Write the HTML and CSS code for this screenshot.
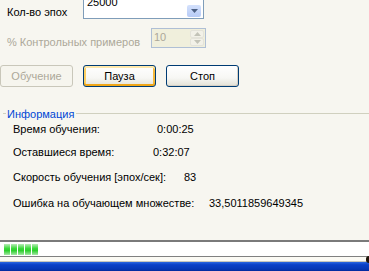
FILE: index.html
```html
<!DOCTYPE html>
<html lang="ru">
<head>
    <meta charset="UTF-8">
    <title>Обучение сети</title>
    <link rel="stylesheet" href="styles.css">
</head>
<body>
    <div class="page">
        <div class="field-row epochs">
            <span class="field-label">Кол-во эпох</span>
            <div class="combo">
                <span class="combo-text">25000</span>
                <span class="combo-btn">
                    <svg width="7" height="4" viewBox="0 0 7 4"><path d="M0 0h7L3.5 4z" fill="#4d6185"/></svg>
                </span>
            </div>
        </div>

        <div class="field-row control">
            <span class="field-label disabled">% Контрольных примеров</span>
            <div class="numeric">
                <span class="numeric-text">10</span>
                <span class="spinner">
                    <span class="spin-btn"><svg width="7" height="4" viewBox="0 0 7 4"><path d="M0 4h7L3.5 0z" fill="#c3c3b8"/></svg></span>
                    <span class="spin-btn"><svg width="7" height="4" viewBox="0 0 7 4"><path d="M0 0h7L3.5 4z" fill="#c3c3b8"/></svg></span>
                </span>
            </div>
        </div>

        <div class="controls">
            <button class="btn" disabled>Обучение</button>
            <button class="btn hover">Пауза</button>
            <button class="btn">Стоп</button>
        </div>

        <div class="group">
            <div class="group-head">
                <span class="group-line short"></span>
                <span class="group-title">Информация</span>
                <span class="group-line"></span>
            </div>
            <div class="info-row"><span class="info-label">Время обучения:</span><span>0:00:25</span></div>
            <div class="info-row"><span class="info-label">Оставшиеся время:</span><span>0:32:07</span></div>
            <div class="info-row"><span class="info-label">Скорость обучения [эпох/сек]:</span><span>83</span></div>
            <div class="info-row"><span class="info-label">Ошибка на обучающем множестве:</span><span>33,5011859649345</span></div>
        </div>

        <div class="progress">
            <span class="block"></span>
            <span class="block"></span>
            <span class="block"></span>
            <span class="block"></span>
            <span class="block"></span>
        </div>
        <div class="strip"></div>
        <div class="taskbar"></div>
        <span class="grip"></span>
    </div>
</body>
</html>
```

FILE: styles.css
```css
* {
    box-sizing: border-box;
    margin: 0;
    padding: 0;
}

body {
    font-family: "Liberation Sans", Arial, sans-serif;
    font-size: 11px;
    line-height: 13px;
    color: #000;
    background-color: #f7f6f0;
}

.page {
    position: relative;
    height: 271px;
    overflow: hidden;
    background-color: #f7f6f0;
}

.field-row {
    display: flex;
    margin-left: 7px;
}

.field-label {
    white-space: nowrap;
}

.field-label.disabled {
    color: #aca899;
}

.epochs {
    margin-top: -4px;
    height: 23px;
}

.epochs .field-label {
    width: 76px;
    padding-top: 10px;
}

.combo {
    width: 121px;
    height: 23px;
    border: 1px solid #7f9db9;
    background-color: #fff;
    display: flex;
    justify-content: space-between;
}

.combo-text {
    padding-left: 3px;
    margin-top: -1px;
    line-height: 12px;
}

.combo-btn {
    align-self: flex-end;
    width: 14px;
    height: 12px;
    margin: 0 2px 1px 0;
    border-radius: 2px;
    background: linear-gradient(#d4e1fc, #b7cbf6);
    display: flex;
    align-items: center;
    justify-content: center;
}

.control {
    margin-top: 9px;
    height: 20px;
}

.control .field-label {
    width: 144px;
    padding-top: 8px;
}

.numeric {
    width: 55px;
    height: 20px;
    border: 1px solid #afbfd5;
    background-color: #f0efdc;
    display: flex;
    justify-content: space-between;
}

.numeric-text {
    color: #aca899;
    padding: 2px 0 0 2px;
}

.spinner {
    display: flex;
    flex-direction: column;
    width: 14px;
    margin: 1px 1px 1px 0;
}

.spin-btn {
    flex: 1;
    border: 1px solid #e4e3da;
    border-radius: 2px;
    background-color: #f2f1e8;
    display: flex;
    align-items: center;
    justify-content: center;
}

.controls {
    display: flex;
    gap: 10px;
    margin-top: 17px;
}

.btn {
    width: 73px;
    height: 22px;
    font: inherit;
    color: #000;
    border: 1px solid #003c74;
    border-radius: 3px;
    background: linear-gradient(#fff 0%, #f7f7f4 60%, #e3e1d6 100%);
    box-shadow: inset -1px -1px 0 #d6d0c5;
}

.btn.hover {
    box-shadow: inset 0 2px 0 #ffe9ac, inset 0 -2px 0 #f0a618, inset 2px 0 0 #fccf63, inset -2px 0 0 #f5b93c;
}

.btn:disabled {
    color: #aca899;
    border-color: #c9c7ba;
    background: #f6f5ee;
    box-shadow: none;
}

.group {
    margin-top: 21px;
}

.group-head {
    display: flex;
    margin-left: 3px;
}

.group-title {
    color: #0046d5;
    margin: 0 2px 0 1px;
}

.group-line {
    flex: 1;
    height: 1px;
    margin-top: 5px;
    background-color: #d0d0bf;
}

.group-line.short {
    flex: 0 0 3px;
}

.info-row {
    display: flex;
    padding-left: 13px;
    white-space: nowrap;
}

.info-row:nth-of-type(2) { margin-top: 2px; }
.info-row:nth-of-type(3) { margin-top: 10px; }
.info-row:nth-of-type(4) { margin-top: 12px; }
.info-row:nth-of-type(5) { margin-top: 13px; }

.info-row:nth-of-type(2) .info-label { width: 144px; }
.info-row:nth-of-type(3) .info-label { width: 140px; }
.info-row:nth-of-type(4) .info-label { width: 171px; }
.info-row:nth-of-type(5) .info-label { width: 196px; }

.progress {
    margin-top: 30px;
    height: 17px;
    border-top: 2px solid #7a7a7a;
    border-bottom: 1px solid #808080;
    background-color: #fff;
    display: flex;
    gap: 1px;
    padding: 2px 0 0 4px;
}

.block {
    width: 6px;
    height: 11px;
    background: linear-gradient(#b8ecb8, #3bd93b 40%, #2ccf2c 60%, #a6e6a6);
}

.strip {
    height: 5px;
    background-color: #fbfaf4;
    border-bottom: 1px solid #c7c6bd;
}

.taskbar {
    height: 9px;
    background: linear-gradient(#2a66e0, #0a40c8 30%, #0536b4 80%, #03289a);
}

.grip {
    position: absolute;
    right: 0;
    top: 256px;
    width: 3px;
    height: 7px;
    border-radius: 3px 0 0 3px;
    background-color: #1e1408;
}
```
